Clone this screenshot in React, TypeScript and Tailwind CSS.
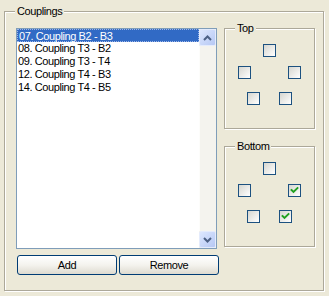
import type { ReactNode } from 'react'

const ITEMS = [
  '07. Coupling B2 - B3',
  '08. Coupling T3 - B2',
  '09. Coupling T3 - T4',
  '12. Coupling T4 - B3',
  '14. Coupling T4 - B5',
]

// checkbox layout per box: rows of [checked...], gap between boxes in a row
const TOP_ROWS: { boxes: boolean[]; gap: string }[] = [
  { boxes: [false], gap: 'gap-0' },
  { boxes: [false, false], gap: 'gap-[37px]' },
  { boxes: [false, false], gap: 'gap-[19px]' },
]

const BOTTOM_ROWS: { boxes: boolean[]; gap: string }[] = [
  { boxes: [false], gap: 'gap-0' },
  { boxes: [false, true], gap: 'gap-[37px]' },
  { boxes: [false, true], gap: 'gap-[19px]' },
]

function GroupBox({ title, className, children }: { title: string; className: string; children?: ReactNode }) {
  return (
    <div
      className={`relative border border-[#ACA899] shadow-[1px_1px_0_#fff,inset_1px_1px_0_#fff] ${className}`}
    >
      <span className="absolute -top-[7px] left-[10px] bg-[#ECE9D8] px-[2px] text-[11px] leading-[13px] text-black">
        {title}
      </span>
      {children}
    </div>
  )
}

function CheckBox({ checked }: { checked: boolean }) {
  return (
    <div className="h-[13px] w-[13px] border border-[#1C5180] bg-gradient-to-br from-[#D6D6D0] to-white">
      {checked && (
        <svg width="11" height="11" viewBox="0 0 11 11">
          <path d="M2.5 5 L4.5 7 L8.5 3" fill="none" stroke="#21A121" strokeWidth="1.9" strokeLinecap="square" />
        </svg>
      )}
    </div>
  )
}

function CheckLayout({ rows }: { rows: { boxes: boolean[]; gap: string }[] }) {
  return (
    <div className="flex flex-col items-center pt-[15px]">
      {rows.map((row, i) => (
        <div
          key={i}
          className={`flex ${row.gap} ${i === 1 ? 'mt-[9px]' : ''} ${i === 2 ? 'mt-[13px]' : ''}`}
        >
          {row.boxes.map((c, j) => (
            <CheckBox key={j} checked={c} />
          ))}
        </div>
      ))}
    </div>
  )
}

function ScrollButton({ dir }: { dir: 'up' | 'down' }) {
  return (
    <div className="flex h-[17px] w-[17px] items-center justify-center rounded-[2px] border border-[#E4EBFC] bg-gradient-to-br from-[#DDE7FE] to-[#B6C8F4]">
      <svg width="9" height="6" viewBox="0 0 9 6">
        <path
          d={dir === 'up' ? 'M1 5 L4.5 1.5 L8 5' : 'M1 1 L4.5 4.5 L8 1'}
          fill="none"
          stroke="#4D6185"
          strokeWidth="2"
        />
      </svg>
    </div>
  )
}

function XPButton({ label }: { label: string }) {
  return (
    <button
      type="button"
      className="h-[20px] w-[100px] rounded-[3px] border border-[#003C74] bg-gradient-to-b from-white via-[#F4F3EE] to-[#DEDBD0] text-[11px] leading-[18px] font-normal text-black"
    >
      {label}
    </button>
  )
}

export default function App() {
  return (
    <div className="h-[296px] w-[329px] bg-[#ECE9D8] pl-[4px] pt-[11px] font-['Liberation_Sans',Arial,sans-serif] tracking-[-0.4px]">
      <GroupBox title="Couplings" className="h-[280px] w-[320px] pl-[11px] pt-[16px]">
        <div className="flex gap-[5px]">
          {/* List + buttons */}
          <div className="flex w-[203px] flex-col">
            <div className="flex h-[221px] w-[201px] border border-[#7F9DB9] bg-white">
              <div className="flex-1">
                {ITEMS.map((item, i) => (
                  <div
                    key={item}
                    className={`h-[13px] pl-[1px] text-[11px] leading-[13px] whitespace-nowrap ${
                      i === 0
                        ? 'border border-dotted border-[#9DB6E8] bg-[#316AC5] leading-[11px] text-white'
                        : 'text-black'
                    }`}
                  >
                    {item}
                  </div>
                ))}
              </div>
              <div className="flex w-[17px] flex-col bg-[#F4F3EE]">
                <ScrollButton dir="up" />
                <div className="flex-1 border-l border-[#FDFDFB]" />
                <ScrollButton dir="down" />
              </div>
            </div>
            <div className="mt-[6px] ml-[1px] flex gap-[2px]">
              <XPButton label="Add" />
              <XPButton label="Remove" />
            </div>
          </div>

          {/* Top / Bottom position boxes */}
          <div className="flex flex-col gap-[17px]">
            <GroupBox title="Top" className="h-[101px] w-[91px]">
              <CheckLayout rows={TOP_ROWS} />
            </GroupBox>
            <GroupBox title="Bottom" className="h-[101px] w-[91px]">
              <CheckLayout rows={BOTTOM_ROWS} />
            </GroupBox>
          </div>
        </div>
      </GroupBox>
    </div>
  )
}
